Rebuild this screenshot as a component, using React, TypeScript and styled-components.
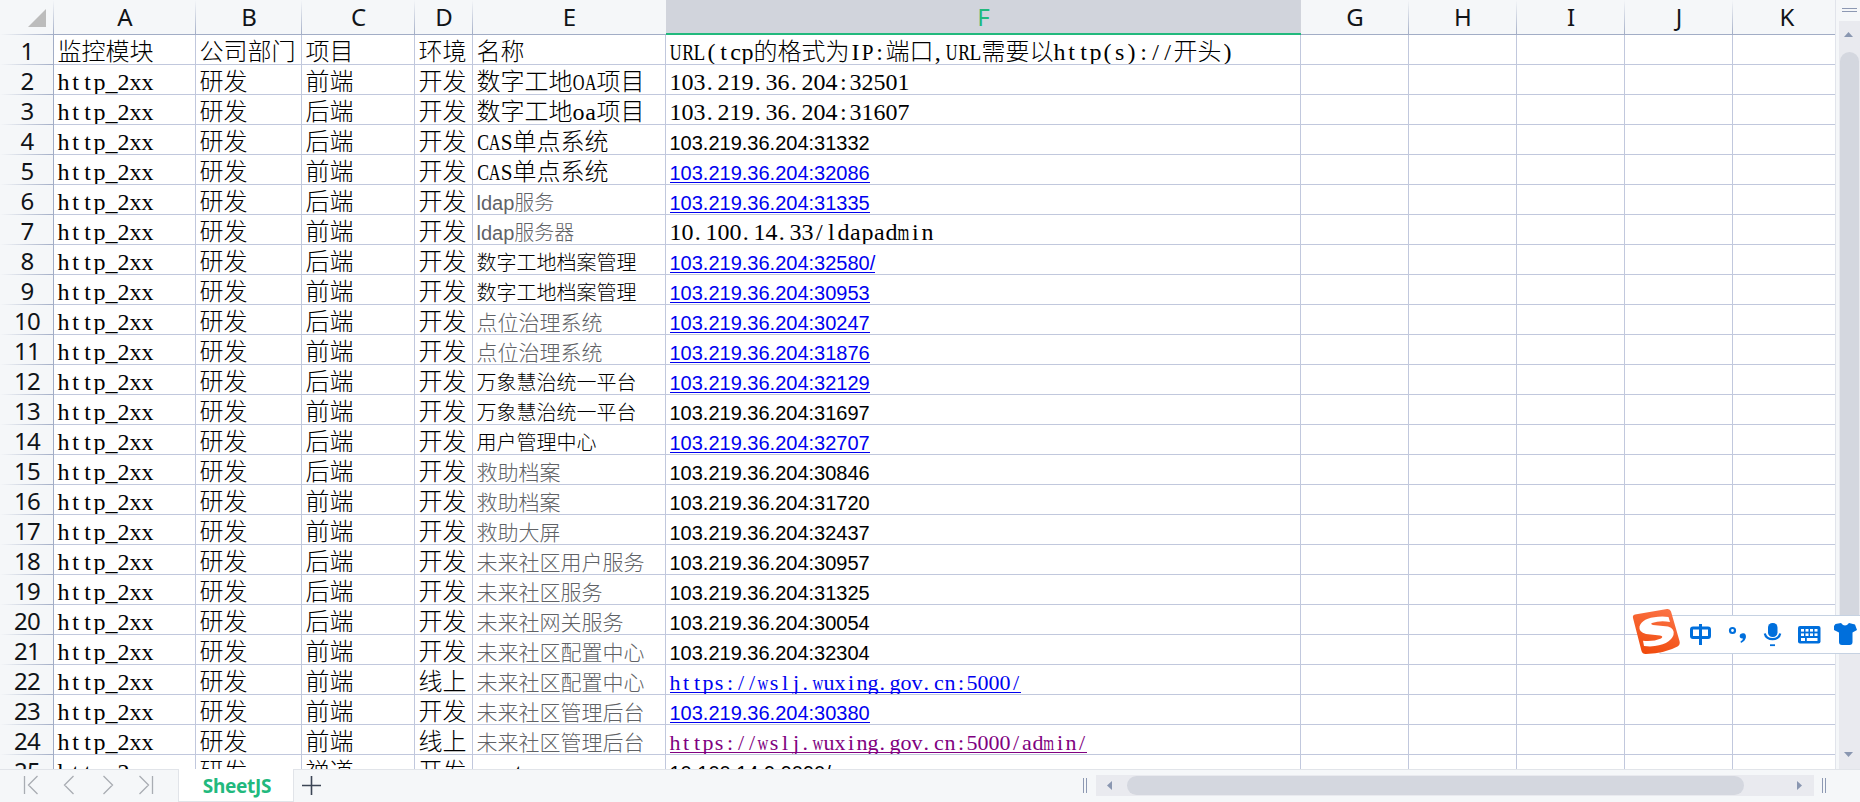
import React from "react";
import styled, { createGlobalStyle, css } from "styled-components";

const GlobalStyle = createGlobalStyle`
  html, body { margin: 0; padding: 0; overflow: hidden; background: #f5f7f9; }
  * { box-sizing: border-box; }
`;

const SONG = `"Liberation Serif", "Noto Sans CJK SC", serif`;
const UI = `"Noto Sans", "Noto Sans CJK SC", sans-serif`;

const Page = styled.div`
  width: 1860px;
  height: 802px;
  display: flex;
  flex-direction: column;
  background: #f5f7f9;
  font-family: ${UI};
  position: relative;
  overflow: hidden;
`;
const Main = styled.div`
  display: flex;
  height: 769px;
`;
const Sheet = styled.div`
  width: 1836px;
  height: 769px;
  overflow: hidden;
  background: #fff;
  border-right: 1px solid #e1e4eb;
`;
const HeaderRow = styled.div`
  display: flex;
  height: 35px;
`;
const Corner = styled.div`
  width: 54px;
  height: 35px;
  flex: none;
  padding: 9px 0 0 28px;
  background:
    linear-gradient(to bottom, #f5f7f9, #a2adc6) right / 1px 100% no-repeat,
    linear-gradient(to right, #f5f7f9, #a2adc6) bottom / 100% 1px no-repeat,
    #f5f7f9;
  svg { display: block; }
`;
const ColHead = styled.div<{ $w: number; $active?: boolean; $plain?: boolean }>`
  width: ${(p) => p.$w}px;
  height: 35px;
  flex: none;
  font-size: 24px;
  line-height: 33px;
  text-align: center;
  color: #111418;
  background:
    linear-gradient(#a2adc6, #a2adc6) bottom / 100% 1px no-repeat,
    ${(p) => (p.$plain ? "" : "linear-gradient(to bottom, #f5f7f9, #a2adc6) right / 1px 100% no-repeat,")}
    #f5f7f9;
  ${(p) =>
    p.$active &&
    css`
      color: #22b97d;
      background: #d1d4dc;
      border-bottom: 2px solid #22b97d;
    `}
`;
const Row = styled.div`
  display: flex;
  height: 30px;
`;
const RowHead = styled.div`
  width: 54px;
  height: 30px;
  flex: none;
  font-size: 24px;
  line-height: 31px;
  letter-spacing: -0.8px;
  text-align: center;
  color: #111418;
  background:
    linear-gradient(#a2adc6, #a2adc6) right / 1px 100% no-repeat,
    linear-gradient(to right, #f5f7f9, #a2adc6) bottom / 100% 1px no-repeat,
    #f5f7f9;
`;
const Cell = styled.div<{ $w: number; $size?: number; $color?: string; $sans?: boolean }>`
  width: ${(p) => p.$w}px;
  height: 30px;
  flex: none;
  overflow: hidden;
  white-space: nowrap;
  padding-left: 3.5px;
  border-right: 1px solid #c1c8dd;
  border-bottom: 1px solid #c1c8dd;
  font-family: ${(p) => (p.$sans ? `"Liberation Sans", "Noto Sans CJK SC", sans-serif` : SONG)};
  font-size: ${(p) => p.$size ?? 24}px;
  font-weight: 300;
  line-height: 0;
  color: ${(p) => p.$color ?? "#000"};
  &::before {
    content: "";
    display: inline-block;
    height: 25px;
  }
`;
const Link = styled.span<{ $lift: number }>`
  background: linear-gradient(currentColor, currentColor) 0 calc(100% - ${(p) => p.$lift}px) / 100% 1px no-repeat;
`;
/* A Latin glyph set in a half-width cell: stops sit at its left, narrow glyphs are centred, wide ones condensed. */
const Half = styled.span<{ $adv: number; $stop: boolean }>`
  ${(p) =>
    p.$stop
      ? css`padding: 0 ${0.45 - p.$adv}em 0 0.05em;`
      : p.$adv <= 0.5
      ? css`padding: 0 ${(0.5 - p.$adv) / 2}em;`
      : css`
          display: inline-block;
          margin: 0 ${(0.5 - p.$adv) / 2}em;
          transform: scaleX(${0.49 / p.$adv});
        `}
`;

const ADV: Record<string, number> = {
  t: 0.278, c: 0.444, a: 0.444, s: 0.389, l: 0.278, j: 0.278, i: 0.278, m: 0.778, w: 0.722,
  z: 0.444, e: 0.444, ".": 0.25, ",": 0.25, ":": 0.278, "/": 0.278, "(": 0.333, ")": 0.333,
  U: 0.722, R: 0.667, L: 0.611, I: 0.333, P: 0.556, C: 0.667, A: 0.722, S: 0.556, O: 0.722,
};

function Mono({ text }: { text: string }) {
  const parts: React.ReactNode[] = [];
  let run = "";
  [...text].forEach((ch, i) => {
    const adv = ADV[ch];
    if (adv === undefined) {
      run += ch;
      return;
    }
    if (run) parts.push(run);
    run = "";
    parts.push(<Half key={i} $adv={adv} $stop={ch === "." || ch === ","}>{ch}</Half>);
  });
  if (run) parts.push(run);
  return <>{parts}</>;
}

type Kind = "song" | "sans" | "link" | "songLink" | "visited";
type Tone = "big" | "mid" | "ldap" | "gray";
const data: [string, string, string, Tone, string, Kind][] = [
  ["前端", "开发", "数字工地OA项目", "big", "103.219.36.204:32501", "song"],
  ["后端", "开发", "数字工地oa项目", "big", "103.219.36.204:31607", "song"],
  ["后端", "开发", "CAS单点系统", "big", "103.219.36.204:31332", "sans"],
  ["前端", "开发", "CAS单点系统", "big", "103.219.36.204:32086", "link"],
  ["后端", "开发", "ldap服务", "ldap", "103.219.36.204:31335", "link"],
  ["前端", "开发", "ldap服务器", "ldap", "10.100.14.33/ldapadmin", "song"],
  ["后端", "开发", "数字工地档案管理", "mid", "103.219.36.204:32580/", "link"],
  ["前端", "开发", "数字工地档案管理", "mid", "103.219.36.204:30953", "link"],
  ["后端", "开发", "点位治理系统", "gray", "103.219.36.204:30247", "link"],
  ["前端", "开发", "点位治理系统", "gray", "103.219.36.204:31876", "link"],
  ["后端", "开发", "万象慧治统一平台", "mid", "103.219.36.204:32129", "link"],
  ["前端", "开发", "万象慧治统一平台", "mid", "103.219.36.204:31697", "sans"],
  ["后端", "开发", "用户管理中心", "mid", "103.219.36.204:32707", "link"],
  ["后端", "开发", "救助档案", "gray", "103.219.36.204:30846", "sans"],
  ["前端", "开发", "救助档案", "gray", "103.219.36.204:31720", "sans"],
  ["前端", "开发", "救助大屏", "gray", "103.219.36.204:32437", "sans"],
  ["后端", "开发", "未来社区用户服务", "gray", "103.219.36.204:30957", "sans"],
  ["后端", "开发", "未来社区服务", "gray", "103.219.36.204:31325", "sans"],
  ["后端", "开发", "未来社网关服务", "gray", "103.219.36.204:30054", "sans"],
  ["前端", "开发", "未来社区配置中心", "gray", "103.219.36.204:32304", "sans"],
  ["前端", "线上", "未来社区配置中心", "gray", "https://wslj.wuxing.gov.cn:5000/", "songLink"],
  ["前端", "开发", "未来社区管理后台", "gray", "103.219.36.204:30380", "link"],
  ["前端", "线上", "未来社区管理后台", "gray", "https://wslj.wuxing.gov.cn:5000/admin/", "visited"],
  ["禅道", "开发", "zentao", "big", "10.100.14.9:9090/", "sans"],
];

const W = { A: 142, B: 106, C: 113, D: 58, E: 193, F: 635, G: 108, H: 108, I: 108, J: 108, K: 108 };

function NameCell({ text, tone }: { text: string; tone: Tone }) {
  if (tone === "big") return <Cell $w={W.E}><Mono text={text} /></Cell>;
  if (tone === "mid") return <Cell $w={W.E} $size={20}>{text}</Cell>;
  if (tone === "ldap") return <Cell $w={W.E} $size={20} $sans $color="#606266">{text}</Cell>;
  return <Cell $w={W.E} $size={21} $color="#606266">{text}</Cell>;
}

function UrlCell({ text, kind }: { text: string; kind: Kind }) {
  if (kind === "song") return <Cell $w={W.F}><Mono text={text} /></Cell>;
  if (kind === "sans") return <Cell $w={W.F} $size={20} $sans>{text}</Cell>;
  if (kind === "link")
    return <Cell $w={W.F} $size={20} $sans $color="#0000f0"><Link $lift={1}>{text}</Link></Cell>;
  return (
    <Cell $w={W.F} $size={22} $color={kind === "visited" ? "#800080" : "#0000f0"}>
      <Link $lift={2}><Mono text={text} /></Link>
    </Cell>
  );
}

const Blank = () => (
  <>
    <Cell $w={W.G} /><Cell $w={W.H} /><Cell $w={W.I} /><Cell $w={W.J} /><Cell $w={W.K} />
  </>
);

const VBar = styled.div`
  width: 24px;
  height: 769px;
  padding-left: 3px;
  display: flex;
  flex-direction: column;
`;
const VSplit = styled.div`
  width: 15px;
  height: 4px;
  margin: 8px 0 9px 3px;
  border: solid #8d99b3;
  border-width: 1px 0;
`;
const VTrack = styled.div`
  width: 21px;
  height: 748px;
  background: #e9eaef;
  display: flex;
  flex-direction: column;
  align-items: center;
  padding: 11px 2px 12px 0;
`;
const VThumb = styled.div`
  width: 19px;
  height: 578px;
  margin: 15px 0 auto 2px;
  border-radius: 10px;
  background: #d4d7df;
`;
const Arrow = styled.svg`
  display: block;
  flex: none;
  fill: #8a97b1;
`;

const Bottom = styled.div`
  height: 33px;
  display: flex;
  border-top: 1px solid #e1e4e9;
`;
const Nav = styled.div`
  width: 178px;
  height: 32px;
  svg { display: block; }
`;
const Tab = styled.div`
  width: 116px;
  height: 33px;
  margin-top: -1px;
  border: 1px solid #e1e4e9;
  border-top: 0;
  background: #fff;
  color: #22b97d;
  font-weight: 700;
  font-size: 19px;
  line-height: 34px;
  letter-spacing: -0.3px;
  padding-left: 2px;
  text-align: center;
`;
const Add = styled.svg`
  display: block;
  margin: 6px 0 0 8px;
`;
const HSplit = styled.div<{ $left: number }>`
  width: 4px;
  height: 15px;
  margin: 8px 0 0 ${(p) => p.$left}px;
  border: solid #8d99b3;
  border-width: 0 1px;
`;
const HTrack = styled.div`
  width: 718px;
  height: 21px;
  margin: 5px 0 0 9px;
  background: #e9eaef;
  display: flex;
  align-items: center;
  padding: 0 12px 0 11px;
`;
const HThumb = styled.div`
  width: 617px;
  height: 19px;
  margin: 0 auto 0 15px;
  border-radius: 10px;
  background: #d4d7df;
`;

/* Input-method bar that floats above the sheet. */
const Ime = styled.div`
  position: absolute;
  left: 1630px;
  top: 606px;
  width: 230px;
  height: 50px;
  svg { display: block; }
`;

export default function App() {
  return (
    <Page>
      <GlobalStyle />
      <Main>
        <Sheet>
          <HeaderRow>
            <Corner>
              <svg width="18" height="18"><path d="M18 0V18H0Z" fill="#bcbcbc" /></svg>
            </Corner>
            {Object.entries(W).map(([name, w]) => (
              <ColHead key={name} $w={w} $active={name === "F"} $plain={name === "E"}>
                {name}
              </ColHead>
            ))}
          </HeaderRow>
          <Row>
            <RowHead>1</RowHead>
            <Cell $w={W.A}>监控模块</Cell>
            <Cell $w={W.B}>公司部门</Cell>
            <Cell $w={W.C}>项目</Cell>
            <Cell $w={W.D}>环境</Cell>
            <Cell $w={W.E}>名称</Cell>
            <Cell $w={W.F}><Mono text="URL(tcp的格式为IP:端口,URL需要以http(s)://开头)" /></Cell>
            <Blank />
          </Row>
          {data.map(([proj, env, name, tone, url, kind], i) => (
            <Row key={i}>
              <RowHead>{i + 2}</RowHead>
              <Cell $w={W.A}><Mono text="http_2xx" /></Cell>
              <Cell $w={W.B}>研发</Cell>
              <Cell $w={W.C}>{proj}</Cell>
              <Cell $w={W.D}>{env}</Cell>
              <NameCell text={name} tone={tone} />
              <UrlCell text={url} kind={kind} />
              <Blank />
            </Row>
          ))}
        </Sheet>
        <VBar>
          <VSplit />
          <VTrack>
            <Arrow width="9" height="5"><path d="M4.5 0L9 5H0Z" /></Arrow>
            <VThumb />
            <Arrow width="9" height="5"><path d="M0 0H9L4.5 5Z" /></Arrow>
          </VTrack>
        </VBar>
      </Main>
      <Bottom>
        <Nav>
          <svg width="178" height="32" fill="none" stroke="#a9adb3" strokeWidth="1.3">
            <path d="M24.5 6V24M37.5 6L28.5 15L37.5 24M73.5 6L64.5 15L73.5 24M103.5 6L112.5 15L103.5 24M139.5 6L148.5 15L139.5 24M152.5 6V24" />
          </svg>
        </Nav>
        <Tab>SheetJS</Tab>
        <Add width="20" height="20" stroke="#3c4656" strokeWidth="1.6">
          <path d="M0 9.5H19M9.5 0V19" />
        </Add>
        <HSplit $left={761} />
        <HTrack>
          <Arrow width="5" height="9"><path d="M5 0V9L0 4.5Z" /></Arrow>
          <HThumb />
          <Arrow width="5" height="9"><path d="M0 0V9L5 4.5Z" /></Arrow>
        </HTrack>
        <HSplit $left={8} />
      </Bottom>
      <Ime>
        <svg width="230" height="50" viewBox="0 0 230 50">
          <defs>
            <linearGradient id="logo" x1="0.7" y1="0" x2="0.3" y2="1">
              <stop offset="0" stopColor="#fb7345" />
              <stop offset="1" stopColor="#f04a0c" />
            </linearGradient>
          </defs>
          <rect x="30" y="9.5" width="210" height="38" fill="#fff" stroke="#c6d2e2" />
          <path d="M5 8.5L37 3Q40 2.5 41 5.5L49.5 35Q50.5 38.5 47.5 40.5Q36 47 16 48Q12.5 48.3 11.5 45L3 12Q2.3 9 5 8.5Z" fill="url(#logo)" />
          <path d="M38.5 11L40 16Q30 14.3 22 17Q20 18 23 19L38 20.5Q45 22.5 43.5 29Q40 39 20 40.5L14 40L13 34.8Q23 36 31 32.5Q34 30.5 30 29.5L16 28Q8.5 26 9.5 20.5Q12 12 28 10.7Q34 10.2 38.5 11Z" fill="#fff" />
          <g fill="none" stroke="#006fdc" strokeWidth="3">
            <rect x="61.5" y="22" width="18" height="9.5" rx="1.5" />
            <path d="M70.5 18V39" />
            <circle cx="102.5" cy="24.5" r="2.5" strokeWidth="2.2" />
            <path d="M134.8 27.5C136 35 149 35 150.2 27.5" strokeWidth="2.2" />
            <path d="M140 39.2H145" strokeWidth="1.8" />
          </g>
          <g fill="#006fdc">
            <path d="M112 27.5C117 25.5 118 34 111 37L110.5 35.5Q113 34 113 32.5C108.5 33 109 27.7 112 27.5Z" />
            <rect x="138" y="17" width="9.5" height="14" rx="4.5" />
            <rect x="168" y="20" width="22.5" height="17.5" rx="2" />
            <path d="M205.5 18L211 17Q215 22 219 17L225 18.5L227 24L222.5 26.5V36Q222.5 39 219.5 39H212Q209 39 209 36V26.5L204 24V20Z" />
          </g>
          <g fill="#fff">
            {[171, 175.5, 180, 184.5].map((x) => (
              <React.Fragment key={x}>
                <rect x={x} y="23" width="3" height="2.6" />
                <rect x={x} y="27.4" width="3" height="2.6" />
              </React.Fragment>
            ))}
            <rect x="171" y="32" width="4" height="3" />
            <rect x="176.8" y="32" width="10.7" height="3" />
          </g>
        </svg>
      </Ime>
    </Page>
  );
}
